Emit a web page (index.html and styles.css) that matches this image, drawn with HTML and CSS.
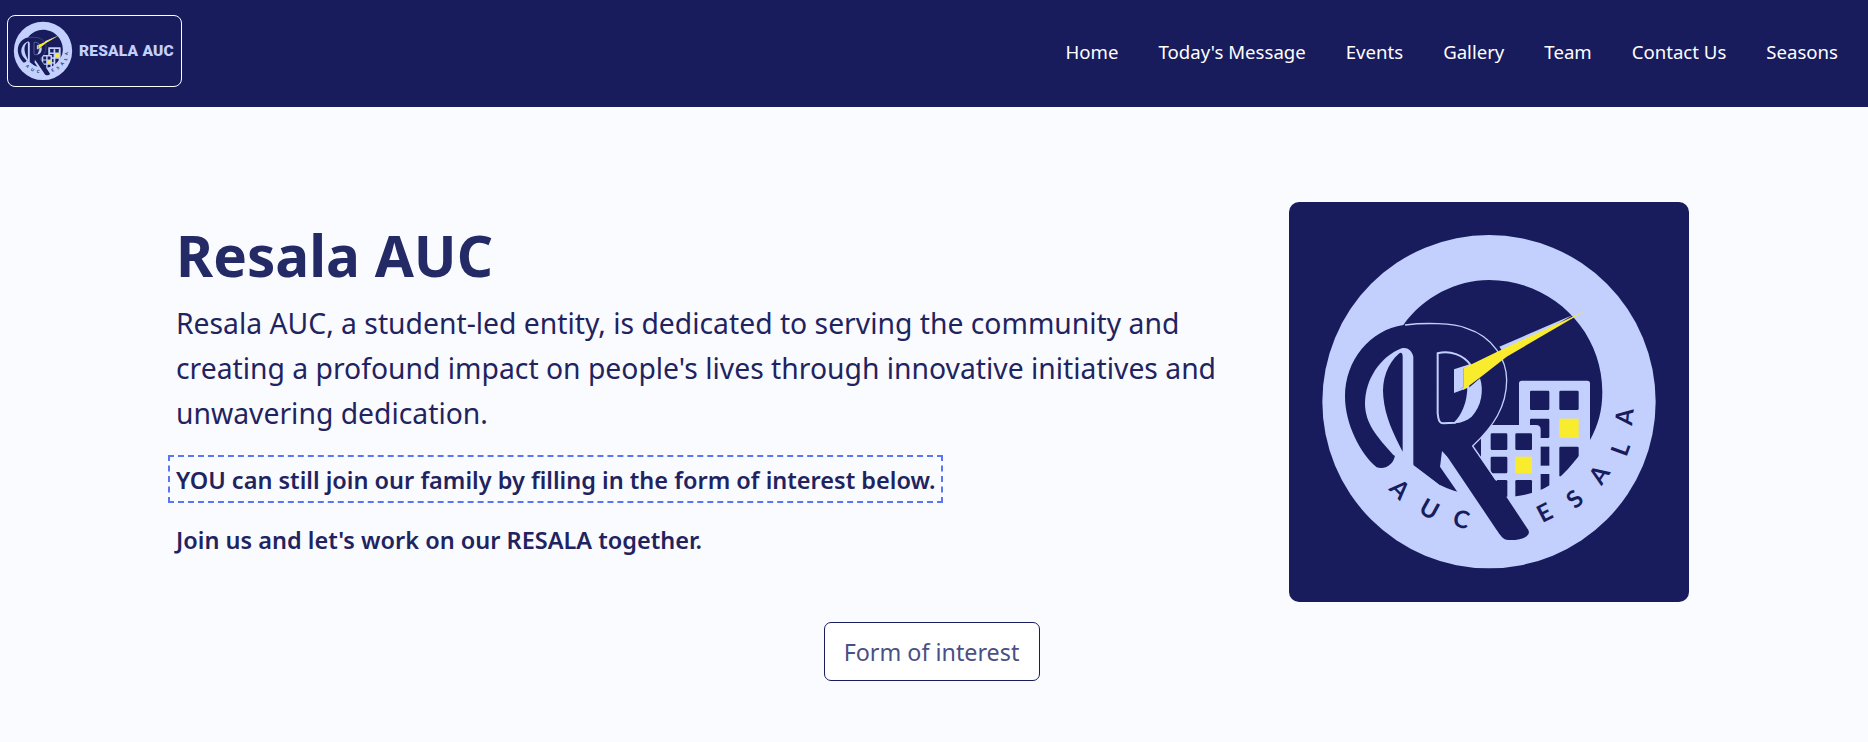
FILE: index.html
```html
<!DOCTYPE html>
<html lang="en">
<head>
  <meta charset="UTF-8">
  <meta name="viewport" content="width=device-width, initial-scale=1.0">
  <title>Resala AUC</title>
  <link rel="stylesheet" href="styles.css">
</head>
<body>
  <svg class="defs" width="0" height="0">
    <defs>
      <clipPath id="disk">
        <path d="M370 405 C430 320 530 270 627 270 C815 270 967 420 967 605 C967 660 955 705 930 750 C905 790 860 850 810 885 C770 910 720 920 680 920 C620 925 540 915 480 885 L400 825 Z"/>
      </clipPath>
      <g id="mark">
        <circle cx="627" cy="635" r="500" fill="#c3d0fd"/>
        <path fill="#181c5c" d="M370 405 C430 320 530 270 627 270 C815 270 967 420 967 605 C967 660 955 705 930 750 C905 790 860 850 810 885 C770 910 720 920 680 920 C620 925 540 915 480 885 L400 825 Z"/>
        <!-- buildings -->
        <rect x="717" y="572" width="213" height="340" rx="8" fill="#c3d0fd"/>
        <g fill="#181c5c" clip-path="url(#disk)">
          <rect x="750" y="602" width="58" height="58" rx="4"/>
          <rect x="838" y="602" width="58" height="58" rx="4"/>
          <rect x="750" y="686" width="58" height="58" rx="4"/>
          <rect x="838" y="770" width="58" height="90" rx="4"/>
          <rect x="770" y="770" width="38" height="57"/>
          <rect x="770" y="852" width="38" height="60"/>
        </g>
        <path fill="#c3d0fd" d="M603 705 H768 Q782 705 782 719 V925 H603 Z"/>
        <g fill="#181c5c" clip-path="url(#disk)">
          <rect x="632" y="730" width="50" height="50" rx="4"/>
          <rect x="706" y="730" width="50" height="50" rx="4"/>
          <rect x="632" y="800" width="50" height="50" rx="4"/>
          <rect x="632" y="870" width="50" height="60" rx="4"/>
          <rect x="706" y="870" width="50" height="60" rx="4"/>
        </g>
        <rect x="838" y="686" width="58" height="58" fill="#f9ec2e"/>
        <rect x="706" y="800" width="50" height="50" fill="#f9ec2e"/>
        <path fill="#c3d0fd" d="M486 783 L480 830 L535 910 L620 925 Z"/>
        <!-- the big R -->
        <path fill="#181c5c" d="M370 405 C430 398 520 398 560 415 C640 440 680 510 680 570 C680 650 640 710 578 768 L745 1020 C755 1040 720 1052 685 1050 C670 1050 660 1035 650 1020 L492 785 C486 780 481 785 480 795 L480 885 L400 822 L345 790 C347 815 320 842 290 832 C240 790 195 700 195 620 C195 510 270 420 370 405 Z"/>
        <path fill="none" stroke="#c3d0fd" stroke-width="4" d="M375 405 C430 398 520 398 560 415 C640 440 680 510 680 570 C680 650 640 710 578 768 L650 872"/>
        <path fill="#c3d0fd" d="M365 475 C300 500 255 570 255 640 C255 700 290 740 340 795 L400 825 L400 500 C395 480 380 470 365 475 Z"/>
        <path fill="#181c5c" d="M358 490 C322 520 305 570 310 620 C315 680 340 730 368 785 L368 500 C368 490 364 486 358 490 Z"/>
        <!-- counter of the R and the beam -->
        <path fill="#181c5c" stroke="#c3d0fd" stroke-width="6" d="M473 490 C510 480 550 495 572 525 L525 540 L525 605 L565 590 C565 640 545 680 525 698 L490 700 C478 700 475 690 473 670 Z"/>
        <path fill="#c3d0fd" d="M525 540 L550 530 L550 592 L525 605 Z"/>
        <path fill="#c3d0fd" d="M565 595 L600 565 C612 600 605 650 575 680 C560 692 545 698 525 700 C545 680 565 640 565 595 Z"/>
        <path fill="#c3d0fd" d="M658 470 L880 374 L675 495 Z"/>
        <path fill="#f9ec2e" d="M550 535 L658 482 L915 363 L680 500 L610 555 L550 600 Z"/>
        <!-- ring lettering -->
        <g class="mark-letters">
          <text transform="translate(362 895) rotate(45)">A</text>
          <text transform="translate(450 955) rotate(29)">U</text>
          <text transform="translate(545 985) rotate(13)">C</text>
          <text transform="translate(792 965) rotate(-27)">E</text>
          <text transform="translate(882 925) rotate(-41)">S</text>
          <text transform="translate(955 852) rotate(-56)">A</text>
          <text transform="translate(1018 775) rotate(-70)">L</text>
          <text transform="translate(1030 680) rotate(-84)">A</text>
        </g>
      </g>
    </defs>
  </svg>

  <div class="navbar">
    <a class="brand" href="#">
      <svg class="brand-mark" viewBox="27 36 1200 1200"><use href="#mark"/></svg>
      <span>RESALA AUC</span>
    </a>
    <ul class="nav-links">
      <li><a href="#">Home</a></li>
      <li><a href="#">Today's Message</a></li>
      <li><a href="#">Events</a></li>
      <li><a href="#">Gallery</a></li>
      <li><a href="#">Team</a></li>
      <li><a href="#">Contact Us</a></li>
      <li><a href="#">Seasons</a></li>
    </ul>
  </div>

  <div class="hero">
    <div class="hero-row">
      <div class="hero-text">
        <h1>Resala AUC</h1>
        <p class="lead">Resala AUC, a student-led entity, is dedicated to serving the community and creating a profound impact on people's lives through innovative initiatives and unwavering dedication.</p>
        <p class="callout dashed">YOU can still join our family by filling in the form of interest below.</p>
        <p class="callout">Join us and let's work on our RESALA together.</p>
      </div>
      <svg class="hero-logo" viewBox="27 36 1200 1200">
        <rect x="27" y="36" width="1200" height="1200" fill="#181c5c"/>
        <use href="#mark"/>
      </svg>
    </div>
    <a class="btn-outline" href="#">Form of interest</a>
  </div>
</body>
</html>
```

FILE: styles.css
```css
* {
  padding: 0;
  margin: 0;
  box-sizing: border-box;
}
body {
  min-height: 100vh;
  background-color: #fafbff;
  font-family: "Noto Sans", "Open Sans", sans-serif;
  color: #1f2460;
}
a {
  text-decoration: none;
}
.defs {
  position: absolute;
}

/* navbar */
.navbar {
  display: flex;
  justify-content: space-between;
  align-items: center;
  height: 107px;
  padding: 0 10px 5px 7px;
  background-color: #181c5c;
}
.brand {
  display: flex;
  align-items: center;
  gap: 1px;
  width: 175px;
  height: 72px;
  border: 1px solid #fff;
  border-radius: 8px;
  color: #c3d0fd;
  font-family: "Roboto", sans-serif;
  font-size: 15.5px;
  font-weight: 900;
  letter-spacing: 0.2px;
  white-space: nowrap;
}
.brand-mark {
  flex: none;
  width: 70px;
  height: 70px;
}
.nav-links {
  display: flex;
  list-style: none;
}
.nav-links a {
  display: block;
  padding: 0 20px;
  font-size: 18.6px;
  color: #fff;
}

/* hero */
.hero {
  padding: 95px 5px 0 0;
}
.hero-row {
  display: flex;
  justify-content: space-between;
  align-items: flex-start;
  padding: 0 174px 0 176px;
}
.hero-text {
  width: 1060px;
  padding-top: 8px;
}
.hero-text h1 {
  font-size: 56.6px;
  font-weight: 700;
  line-height: 91px;
  color: #232a66;
}
.lead {
  font-size: 28.3px;
  line-height: 45px;
}
.callout {
  width: fit-content;
  margin: 12px 0 0 -8px;
  padding: 7px 6px 5px;
  border: 2px solid transparent;
  font-size: 23.5px;
  font-weight: 600;
  line-height: 32px;
}
.callout.dashed {
  margin-top: 19px;
  border: 2px dashed #5a76f5;
}
.hero-logo {
  flex: none;
  width: 400px;
  height: 400px;
  border-radius: 10px;
}
.mark-letters {
  font-family: "Lato", sans-serif;
  font-size: 72px;
  font-weight: 700;
  fill: #181c5c;
  text-anchor: middle;
  dominant-baseline: central;
}
.btn-outline {
  display: block;
  width: 216px;
  height: 59px;
  margin: 20px auto 0;
  border: 1px solid #181c5c;
  border-radius: 7px;
  background-color: #fff;
  font-size: 23.3px;
  line-height: 59px;
  text-align: center;
  color: #4a4f85;
}
```
